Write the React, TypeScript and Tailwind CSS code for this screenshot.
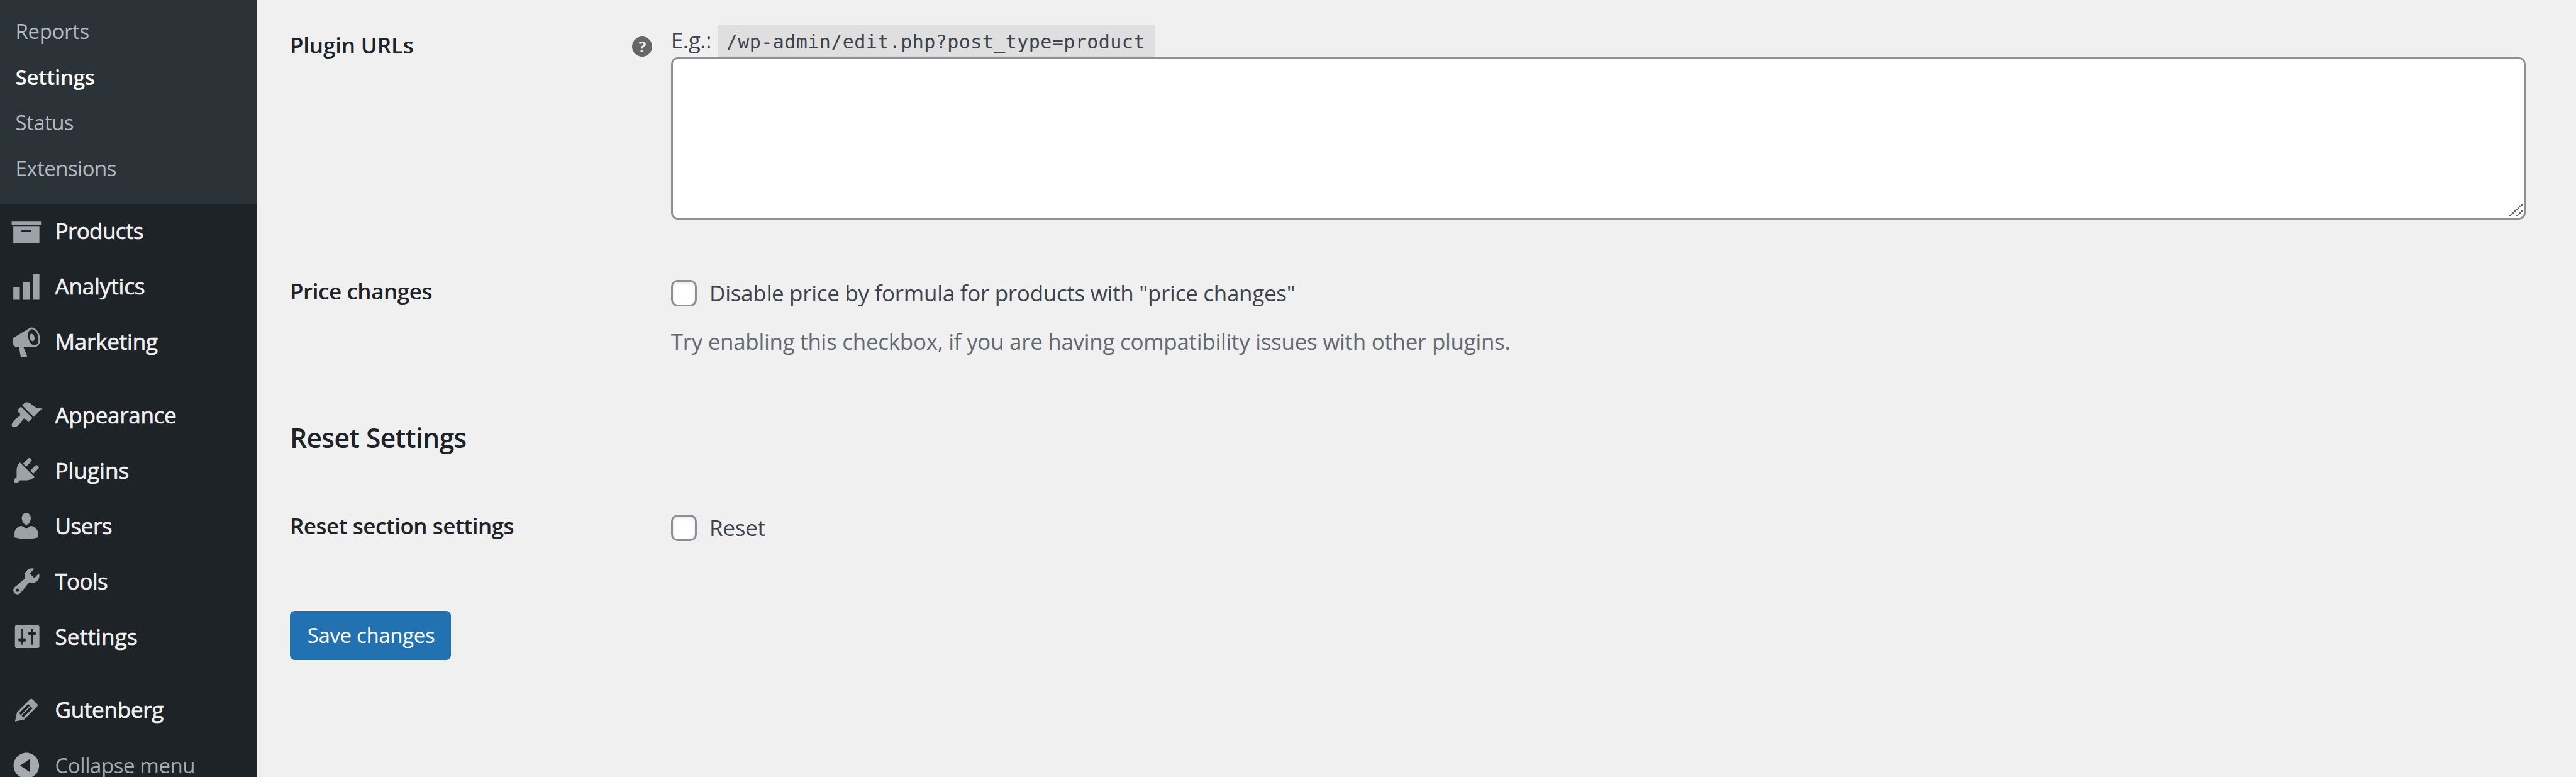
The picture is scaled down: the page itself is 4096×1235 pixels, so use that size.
import type { ReactNode } from "react";

type Item = { label: string; icon: string; tracking: string; gap?: boolean };

const SUBMENU = [
  { label: "Reports", className: "tracking-[-0.38px]" },
  { label: "Settings", className: "font-semibold text-white tracking-[-0.21px]" },
  { label: "Status", className: "tracking-[-0.6px]" },
  { label: "Extensions", className: "tracking-[-0.57px]" },
];

const ITEMS: Item[] = [
  { label: "Products", tracking: "tracking-[-0.6px]", icon: "M19 4v2H1V4h18zM2 7h16v10H2V7zm11 3V9H7v1h6z" },
  { label: "Analytics", tracking: "tracking-[-0.14px]", icon: "M18 18V2h-4v16h4zM12 18V7H8v11h4zM6 18v-8H2v8h4z" },
  {
    label: "Marketing",
    tracking: "tracking-[-0.19px]",
    icon: "M18.15 5.94c.46 1.62.38 3.22-.02 4.48-.42 1.28-1.26 2.18-2.3 2.48-.16.06-.26.06-.4.06-.06.02-.12.02-.18.02-.06.02-.14.02-.22.02h-6.8l2.22 5.5c.02.14-.06.26-.14.34-.08.1-.24.16-.34.16H6.95c-.1 0-.26-.06-.34-.16-.08-.08-.16-.2-.14-.34l-1-5.5H4.25l-.02-.02c-.5.06-1.08-.18-1.54-.62s-.88-1.08-1.06-1.88c-.24-.8-.2-1.56-.02-2.2.18-.62.58-1.08 1.06-1.3l.02-.02 9-5.4c.1-.06.18-.1.24-.16.06-.04.14-.08.24-.12.16-.08.28-.12.5-.18 1.04-.3 2.24.1 3.22.98s1.84 2.24 2.26 3.86zm-2.58 5.98h-.02c.4-.1.74-.34 1.04-.7.58-.7.86-1.76.86-3.04 0-.64-.1-1.3-.28-1.98-.34-1.36-1.02-2.5-1.78-3.24s-1.68-1.1-2.46-.88c-.82.22-1.4.96-1.7 2-.32 1.04-.28 2.36.06 3.72.38 1.36 1 2.5 1.8 3.24.78.74 1.62 1.1 2.48.88zm-2.54-7.08c.22-.04.42-.02.62.04.38.16.76.48 1.02 1s.42 1.2.42 1.78c0 .3-.04.56-.12.8-.18.48-.44.84-.86.94-.34.1-.8-.06-1.14-.4s-.64-.86-.78-1.5c-.18-.62-.12-1.24.02-1.72s.48-.84.82-.94z",
  },
  {
    label: "Appearance",
    tracking: "tracking-[-0.27px]",
    gap: true,
    icon: "M14.48 11.06L7.41 3.99l1.5-1.5c.5-.56 2.3-.47 3.51.32 1.21.8 1.43 1.28 2.91 2.1 1.18.64 2.45 1.26 4.45.85zm-.71.71L6.7 4.7 4.93 6.47c-.39.39-.39 1.02 0 1.41l1.06 1.06c.39.39.39 1.03 0 1.42-.6.6-1.43 1.11-2.21 1.69-.35.26-.7.53-1.01.84C1.43 14.23.4 16.08 1.4 17.07c.99 1 2.84-.03 4.18-1.36.31-.31.58-.66.85-1.02.57-.78 1.08-1.61 1.69-2.21.39-.39 1.02-.39 1.41 0l1.06 1.06c.39.39 1.02.39 1.41 0z",
  },
  {
    label: "Plugins",
    tracking: "tracking-[0.04px]",
    icon: "M13.11 4.36L9.87 7.6 8 5.73l3.24-3.24c.35-.34 1.05-.2 1.56.32.52.51.66 1.21.31 1.55zm-8 1.77l.91-1.12 9.01 9.01-1.19.84c-.71.71-2.63 1.16-3.82 1.16H6.14L4.9 17.26c-.59.59-1.54.59-2.12 0-.59-.58-.59-1.53 0-2.12l1.24-1.24v-3.88c0-1.13.4-3.19 1.09-3.89zm7.26 3.97l3.24-3.24c.34-.35 1.04-.21 1.55.31.52.51.66 1.21.31 1.55l-3.24 3.25z",
  },
  {
    label: "Users",
    tracking: "tracking-[-0.47px]",
    icon: "M10 9.25c-2.27 0-2.73-3.44-2.73-3.44C7 4.02 7.82 2 9.97 2c2.16 0 2.98 2.02 2.71 3.81 0 0-.41 3.44-2.68 3.44zm0 2.57L12.72 10c2.39 0 4.52 2.33 4.52 4.53v2.49s-3.65 1.13-7.24 1.13c-3.65 0-7.24-1.13-7.24-1.13v-2.49c0-2.25 1.94-4.48 4.47-4.48z",
  },
  {
    label: "Tools",
    tracking: "tracking-[-0.7px]",
    icon: "M16.68 9.77c-1.34 1.34-3.3 1.67-4.95.99l-5.41 6.52c-.99.99-2.59.99-3.58 0s-.99-2.59 0-3.57l6.52-5.42c-.68-1.65-.35-3.61.99-4.95 1.28-1.28 3.12-1.62 4.72-1.06l-2.89 2.89 2.82 2.82 2.86-2.87c.53 1.58.18 3.39-1.08 4.65zM3.81 16.21c.4.39 1.04.39 1.43 0 .4-.4.4-1.04 0-1.43-.39-.4-1.03-.4-1.43 0-.39.39-.39 1.03 0 1.43z",
  },
  {
    label: "Settings",
    tracking: "tracking-[0.19px]",
    icon: "M18 16V4c0-.55-.45-1-1-1H4c-.55 0-1 .45-1 1v12c0 .55.45 1 1 1h13c.55 0 1-.45 1-1zM8 11h1c.55 0 1 .45 1 1s-.45 1-1 1H8v1.5c0 .28-.22.5-.5.5s-.5-.22-.5-.5V13H6c-.55 0-1-.45-1-1s.45-1 1-1h1V5.5c0-.28.22-.5.5-.5s.5.22.5.5V11zm5-2h-1c-.55 0-1-.45-1-1s.45-1 1-1h1V5.5c0-.28.22-.5.5-.5s.5.22.5.5V7h1c.55 0 1 .45 1 1s-.45 1-1 1h-1v5.5c0 .28-.22.5-.5.5s-.5-.22-.5-.5V9z",
  },
  {
    label: "Gutenberg",
    tracking: "tracking-[-0.25px]",
    gap: true,
    icon: "M13.89 3.39l2.71 2.72c.46.46.42 1.24.03 1.64l-8.01 8.02-5.56 1.16 1.16-5.58s7.6-7.63 7.99-8.03c.39-.39 1.22-.39 1.68.07zm-2.73 2.79l-5.59 5.61 1.11 1.11 5.54-5.65zm-2.97 8.23l5.58-5.6-1.07-1.08-5.59 5.6z",
  },
];

const COLLAPSE_ICON =
  "M10 2.16c4.33 0 7.84 3.51 7.84 7.84s-3.51 7.84-7.84 7.84S2.16 14.33 2.16 10 5.71 2.16 10 2.16zm2 11.72V6.12L6.18 9.97z";

function MenuIcon({ d }: { d: string }) {
  return (
    <svg viewBox="0 0 20 20" className="mr-[20.2px] ml-[15.5px] size-[51.8px] shrink-0 fill-current" fillRule="evenodd">
      <path d={d} />
    </svg>
  );
}

function Sidebar() {
  return (
    <nav className="h-full w-[409px] shrink-0 overflow-hidden bg-[#1d2327]">
      <ul className="h-[323.6px] bg-[#2c3338] pt-[13.6px] pl-[24.6px] text-[33px] text-[#b4bac1]">
        {SUBMENU.map((s) => (
          <li key={s.label} className={`flex h-[72.5px] items-center whitespace-nowrap ${s.className}`}>
            {s.label}
          </li>
        ))}
      </ul>
      <ul>
        {ITEMS.map((it) => (
          <li
            key={it.label}
            className={`flex h-[88.03px] items-center text-[#9ca2a7] ${it.gap ? "mt-[28.48px]" : ""}`}
          >
            <MenuIcon d={it.icon} />
            <span
              className={`text-[35px] whitespace-nowrap text-[#f0f0f1] [-webkit-text-stroke:0.7px_#f0f0f1] ${it.tracking}`}
            >
              {it.label}
            </span>
          </li>
        ))}
        <li className="flex h-[88.03px] items-center text-[#a7aaad]">
          <MenuIcon d={COLLAPSE_ICON} />
          <span className="text-[33px] leading-[36px] tracking-[-0.43px] whitespace-nowrap">Collapse menu</span>
        </li>
      </ul>
    </nav>
  );
}

function Label({ children, className }: { children: ReactNode; className: string }) {
  return (
    <div
      className={`flex w-[605.8px] shrink-0 items-start justify-between pr-[29.3px] text-[35px] leading-[48px] font-semibold whitespace-nowrap text-[#1d2327] ${className}`}
    >
      {children}
    </div>
  );
}

function Check({ children }: { children: ReactNode }) {
  return (
    <label className="flex h-[48px] items-center text-[35px] whitespace-nowrap text-[#3c434a]">
      <input
        type="checkbox"
        className="mr-[20px] size-[41.4px] shrink-0 appearance-none rounded-[10.4px] border-[3px] border-[#8c8f94] bg-white shadow-[inset_0_2.6px_5.2px_rgba(0,0,0,0.1)]"
      />
      <span className="tracking-[-0.29px]">{children}</span>
    </label>
  );
}

function ResizeGrip() {
  return (
    <svg
      viewBox="0 0 8 8"
      className="pointer-events-none absolute right-[5.2px] bottom-[5.2px] size-[20.7px] fill-[#646464]"
      shapeRendering="crispEdges"
    >
      {[0, 1, 2, 3, 4, 5, 6, 7].map((i) => (
        <rect key={i} x={i} y={7 - i} width="1" height="1" />
      ))}
      {[4, 5, 6, 7].map((i) => (
        <rect key={i} x={i} y={11 - i} width="1" height="1" />
      ))}
    </svg>
  );
}

export default function App() {
  return (
    <div className="flex h-[1235px] w-[4096px] overflow-hidden bg-[#f0f0f1] font-['Open_Sans',sans-serif]">
      <Sidebar />
      <main className="flex flex-1 flex-col items-start pl-[51.9px]">
        <section className="flex items-start">
          <Label className="mt-[47.8px]">
            <span className="tracking-[-0.15px]">Plugin URLs</span>
            <span className="mt-[10px] flex size-[32px] items-center justify-center rounded-full bg-[#666666] text-[24px] leading-none font-bold text-[#f0f0f1]">
              ?
            </span>
          </Label>
          <div className="mt-[38.8px] w-[2949px]">
            <div className="flex h-[51.8px] whitespace-nowrap text-[#3c434a]">
              <span className="w-[75.1px] text-[35px] leading-[50.6px] tracking-[-0.32px]">E.g.:</span>
              <code className="flex w-[693.9px] items-center bg-[#dfdfe0] pt-[5.2px] pl-[12.9px] font-['DejaVu_Sans_Mono',monospace] text-[30px] leading-none tracking-[0.44px]">
                /wp-admin/edit.php?post_type=product
              </code>
            </div>
            <div className="relative h-[258.9px]">
              <textarea className="block h-full w-full resize-none rounded-[10.4px] border-[3px] border-[#8c8f94] bg-white" />
              <ResizeGrip />
            </div>
          </div>
        </section>

        <section className="mt-[89.3px] flex items-start">
          <Label className="tracking-[-0.42px]">Price changes</Label>
          <div className="mt-[3.2px]">
            <Check>Disable price by formula for products with "price changes"</Check>
            <p className="mt-[29.1px] text-[35px] leading-[48px] tracking-[-0.3px] whitespace-nowrap text-[#646970]">
              Try enabling this checkbox, if you are having compatibility issues with other plugins.
            </p>
          </div>
        </section>

        <h2 className="mt-[100.7px] text-[42.5px] leading-[56px] font-semibold tracking-[-0.6px] text-[#1d2327]">
          Reset Settings
        </h2>

        <section className="mt-[87.8px] flex items-start">
          <Label className="tracking-[-0.48px]">Reset section settings</Label>
          <div className="mt-[3.3px]">
            <Check>Reset</Check>
          </div>
        </section>

        <button className="mt-[108px] flex h-[77.7px] w-[256.3px] items-center justify-center rounded-[7.8px] bg-[#2271b1] pl-[2px] text-[33px] leading-none tracking-[-0.35px] whitespace-nowrap text-white">
          Save changes
        </button>
      </main>
    </div>
  );
}
